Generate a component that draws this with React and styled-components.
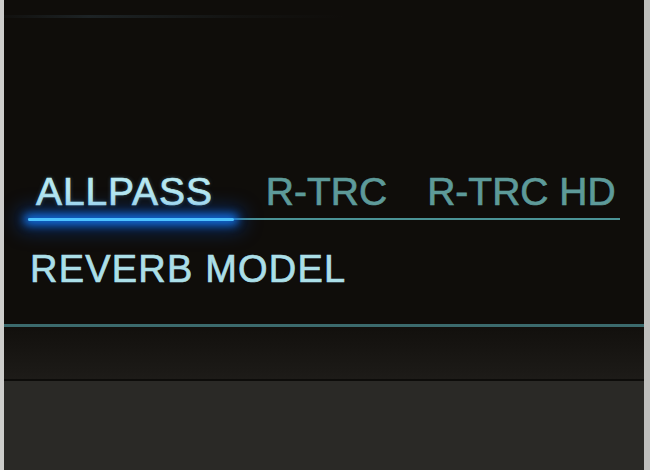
import React from 'react';
import styled, { createGlobalStyle } from 'styled-components';

const GlobalStyle = createGlobalStyle`
  html, body {
    margin: 0;
    padding: 0;
    background: #0f0d0a;
  }
  * {
    box-sizing: border-box;
  }
`;

const Frame = styled.div`
  width: 650px;
  height: 470px;
  display: flex;
  flex-direction: column;
  border-left: 4px solid #cdcdcb;
  border-right: 6px solid #bfbfbd;
  background: #2a2926;
  font-family: "Liberation Sans", Arial, sans-serif;
  overflow: hidden;
`;

const Screen = styled.div`
  height: 327px;
  display: flex;
  flex-direction: column;
  background: #0f0d0a;
  border-bottom: 3px solid #3b6a6d;
  box-shadow: 0 1px 3px rgba(70, 130, 135, 0.35);
`;

const TopStreak = styled.div`
  height: 3px;
  margin-top: 15px;
  width: 340px;
  background: linear-gradient(
    90deg,
    rgba(60, 80, 95, 0.05),
    rgba(60, 85, 100, 0.3) 25%,
    rgba(40, 50, 55, 0.15) 70%,
    transparent
  );
`;

const TabBar = styled.div`
  display: flex;
  gap: 24px;
  margin: 154px 24px 0 24px;
  border-bottom: 2px solid #4b9396;
`;

const Tab = styled.div`
  position: relative;
  padding: ${(p) => (p.$active ? '0 21px 7px 8px' : '0 8px 7px')};
  font-size: 39px;
  line-height: 39px;
  letter-spacing: ${(p) => (p.$active ? '0.9px' : '0')};
  white-space: nowrap;
  -webkit-text-stroke: 0.7px currentColor;
  color: ${(p) => (p.$active ? '#b6e8f1' : '#5d9a99')};
  text-shadow: ${(p) => (p.$active ? '0 0 4px rgba(120, 200, 255, 0.35)' : 'none')};

  &::after {
    content: '';
    display: ${(p) => (p.$active ? 'block' : 'none')};
    position: absolute;
    left: 0;
    right: 0;
    bottom: -3px;
    height: 3px;
    border-radius: 2px;
    background: #4cc2ff;
    box-shadow: 0 0 8px 4px rgba(20, 125, 255, 0.8),
      0 0 20px 9px rgba(0, 90, 230, 0.4);
  }
`;

const ModeLabel = styled.div`
  margin: 30px 0 0 26px;
  font-size: 38px;
  line-height: 38px;
  letter-spacing: 1.2px;
  -webkit-text-stroke: 0.7px currentColor;
  color: #abdfe8;
`;

const Strip = styled.div`
  height: 54px;
  background: linear-gradient(180deg, #12100d, #1d1b18);
  border-bottom: 2px solid #0d0c0a;
`;

const Panel = styled.div`
  flex: 1;
  background: #2a2926;
`;

const tabs = ['ALLPASS', 'R-TRC', 'R-TRC HD'];

export default function App() {
  return (
    <>
      <GlobalStyle />
      <Frame>
        <Screen>
          <TopStreak />
          <TabBar>
            {tabs.map((t, i) => (
              <Tab key={t} $active={i === 0}>
                {t}
              </Tab>
            ))}
          </TabBar>
          <ModeLabel>REVERB MODEL</ModeLabel>
        </Screen>
        <Strip />
        <Panel />
      </Frame>
    </>
  );
}
